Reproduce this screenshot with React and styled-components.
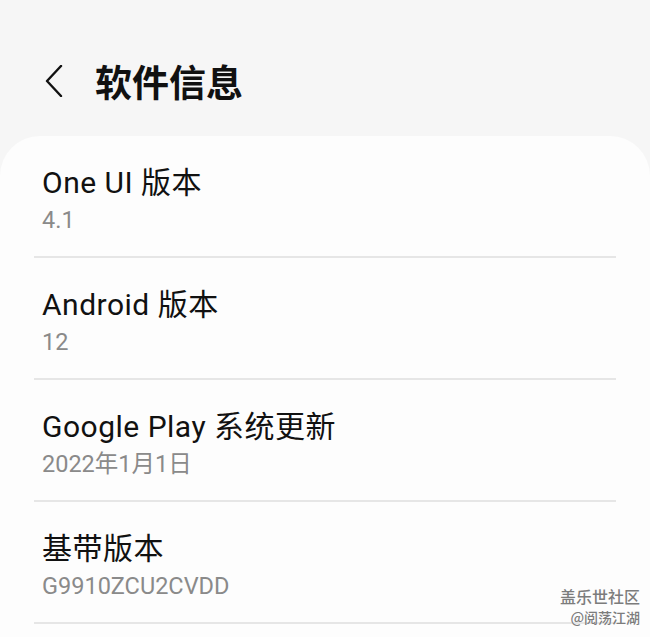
import React from "react";
import styled, { createGlobalStyle } from "styled-components";

const Global = createGlobalStyle`
  html, body { margin: 0; padding: 0; background: #f6f6f6; }
  body { font-family: Roboto, "Noto Sans CJK SC", sans-serif; }
  #root { width: 650px; height: 637px; overflow: hidden; }
`;

const Page = styled.div`
  position: relative;
  width: 650px;
  height: 637px;
  background: #f6f6f6;
  display: flex;
  flex-direction: column;
  overflow: hidden;
`;

const Header = styled.header`
  height: 136px;
  display: flex;
  align-items: center;
  padding-left: 40px;
  padding-top: 25px;
  box-sizing: border-box;
`;

const BackButton = styled.button`
  width: 28px;
  height: 36px;
  border: 0;
  background: none;
  padding: 0;
  display: flex;
  align-items: center;
  justify-content: center;
  margin-right: 27px;
  color: #111;
`;

const Title = styled.h1`
  margin: 0;
  font-family: Roboto, "Noto Sans CJK SC", sans-serif;
  font-size: 37px;
  font-weight: 700;
  color: #111;
`;

const Card = styled.section`
  flex: 1;
  background: #fdfdfd;
  border-radius: 40px 40px 0 0;
  padding: 0 34px;
`;

const Row = styled.div`
  height: 120px;
  display: flex;
  flex-direction: column;
  padding: 28px 8px 0;
  border-bottom: 2px solid #e6e6e6;
  box-sizing: border-box;
  height: 122px;
`;

const RowTitle = styled.div`
  font-size: 30px;
  line-height: 38px;
  letter-spacing: 0.5px;
  color: #111;
`;

const RowValue = styled.div`
  font-size: 23.5px;
  line-height: 30px;
  margin-top: 3px;
  color: #8a8a8a;
`;

const Watermark = styled.div`
  position: absolute;
  right: 10px;
  bottom: 10px;
  display: flex;
  flex-direction: column;
  align-items: flex-end;
  color: #7c7c7c;
  font-family: "Noto Sans CJK SC", sans-serif;
  text-shadow: 0 0 1px rgba(255,255,255,0.8);
`;

const WmLine = styled.span`
  font-size: ${(p) => p.$size}px;
  line-height: ${(p) => p.$lh}px;
  font-weight: 500;
`;

const items = [
  { title: "One UI 版本", value: "4.1" },
  { title: "Android 版本", value: "12" },
  { title: "Google Play 系统更新", value: "2022年1月1日" },
  { title: "基带版本", value: "G9910ZCU2CVDD" },
];

export default function App() {
  return (
    <Page>
      <Global />
      <Header>
        <BackButton aria-label="返回">
          <svg width="20" height="32" viewBox="0 0 20 32" fill="none">
            <path d="M17 1 L3 16 L17 31" stroke="#111" strokeWidth="2.4" strokeLinecap="round" strokeLinejoin="round" />
          </svg>
        </BackButton>
        <Title>软件信息</Title>
      </Header>
      <Card>
        {items.map((it) => (
          <Row key={it.title}>
            <RowTitle>{it.title}</RowTitle>
            <RowValue>{it.value}</RowValue>
          </Row>
        ))}
      </Card>
      <Watermark>
        <WmLine $size={16} $lh={22}>盖乐世社区</WmLine>
        <WmLine $size={14} $lh={20}>@阅荡江湖</WmLine>
      </Watermark>
    </Page>
  );
}
